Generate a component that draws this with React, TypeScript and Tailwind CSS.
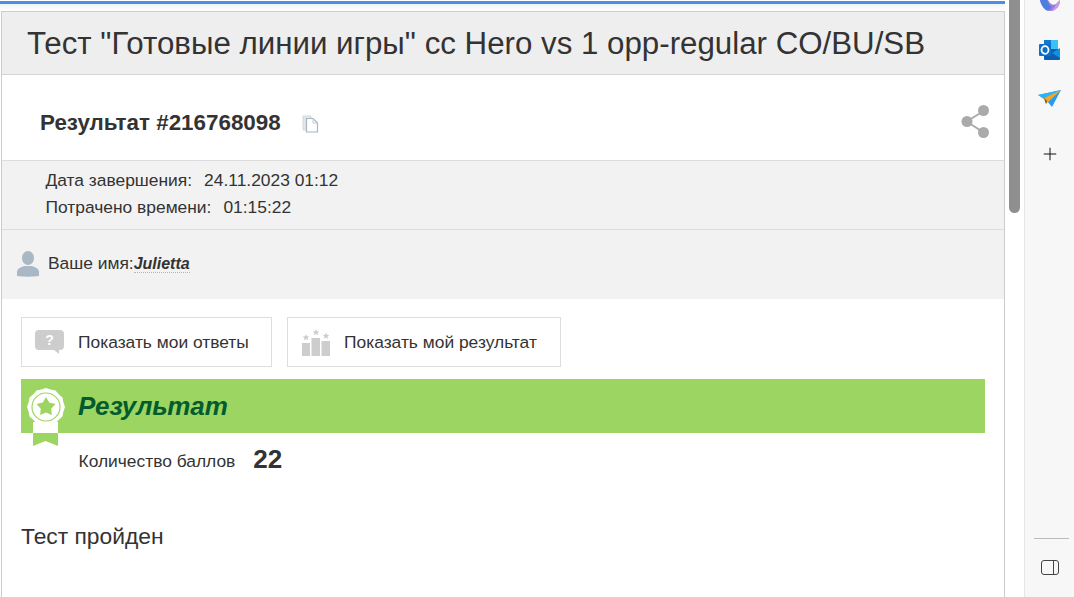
import { Plus } from 'lucide-react'

function CopyIcon() {
  return (
    <svg width="17" height="18" viewBox="0 0 17 18" className="block">
      <path d="M1 1h8v14H1z" fill="#e3e6ea" stroke="#d4d8dd" />
      <path d="M4.500 3.500h6.500l4.500 4.500v9h-11z" fill="#fff" stroke="#a9b4bf" strokeWidth="1.200" />
      <path d="M11 3.500V8h4.500" fill="none" stroke="#c5ccd3" />
    </svg>
  )
}

function ShareIcon() {
  return (
    <svg width="30" height="36" viewBox="0 0 30 36" className="block">
      <path d="M5.500 18.500 22 8.500M5.500 18.500 22 29" stroke="#aaa" strokeWidth="2" />
      <circle cx="6" cy="18.500" r="5.500" fill="#aaa" />
      <circle cx="22.500" cy="7.500" r="5.500" fill="#aaa" />
      <circle cx="22.500" cy="29.500" r="5.500" fill="#aaa" />
    </svg>
  )
}

function UserIcon() {
  return (
    <svg width="22" height="26" viewBox="0 0 22 26" className="block">
      <ellipse cx="11" cy="7" rx="6" ry="7" fill="#a9b8c4" />
      <path d="M0 25v-4c0-4 5-5 7-6h8c2 1 7 2 7 6v4q-11 1.500-22 0z" fill="#a9b8c4" />
    </svg>
  )
}

function QuestionIcon() {
  return (
    <svg width="29" height="24" viewBox="0 0 29 24" className="block">
      <path d="M4 0h21a4 4 0 0 1 4 4v12a4 4 0 0 1-4 4h-1v4l-5-4H4a4 4 0 0 1-4-4V4a4 4 0 0 1 4-4z" fill="#cdcdcd" />
      <text x="14.500" y="15" textAnchor="middle" fontSize="14" fontWeight="700" fill="#fff" fontFamily="Liberation Sans">?</text>
    </svg>
  )
}

function Star({ x, y, r }: { x: number; y: number; r: number }) {
  const pts = Array.from({ length: 10 }, (_, i) => {
    const a = (Math.PI / 5) * i - Math.PI / 2
    const d = i % 2 ? r * 0.45 : r
    return `${x + d * Math.cos(a)},${y + d * Math.sin(a)}`
  }).join(' ')
  return <polygon points={pts} fill="#cdcdcd" />
}

function PodiumIcon() {
  return (
    <svg width="30" height="27" viewBox="0 0 30 27" className="block">
      <Star x={5} y={8.500} r={3.500} />
      <Star x={15} y={3.500} r={3.500} />
      <Star x={25} y={7} r={3.500} />
      <rect x="1" y="14" width="8" height="13" fill="#cdcdcd" />
      <rect x="10.500" y="9" width="8.500" height="18" fill="#cdcdcd" />
      <rect x="20.500" y="12" width="8.500" height="15" fill="#cdcdcd" />
    </svg>
  )
}

function Badge() {
  const teeth = Array.from({ length: 24 }, (_, i) => {
    const a = (Math.PI / 12) * i
    const d = i % 2 ? 18 : 19
    return `${19 + d * Math.cos(a)},${19 + d * Math.sin(a)}`
  }).join(' ')
  const star = Array.from({ length: 10 }, (_, i) => {
    const a = (Math.PI / 5) * i - Math.PI / 2
    const d = i % 2 ? 5.500 : 10
    return `${19 + d * Math.cos(a)},${19 + d * Math.sin(a)}`
  }).join(' ')
  return (
    <svg width="38" height="59" viewBox="0 0 38 59" className="block">
      <path d="M6 34h25v24l-12.500-5L6 58z" fill="#9dd563" />
      <path d="M6 34h25v11H6z" fill="#fff" />
      <polygon points={teeth} fill="#fff" />
      <circle cx="19" cy="19" r="14" fill="#fff" stroke="#9dd563" strokeWidth="1.200" />
      <polygon points={star} fill="#9dd563" />
    </svg>
  )
}

function CopilotIcon() {
  return (
    <svg width="22" height="11" viewBox="0 0 22 11" className="block">
      <path d="M1 0h20c0 6-4 11-10 11C6 11 2 6 1 0z" fill="#9a78dc" />
      <path d="M1 0h7c1 3 2 5 4 7-1 3-3 4-5 3C4 8 2 4 1 0z" fill="#4a7ee0" />
      <path d="M9 0h12l-4 4c-3 2-6 0-8-4z" fill="#f7f7f7" />
      <path d="M21 0c0 6-4 11-10 11 3-1 5-4 6-7z" fill="#c99ae4" />
    </svg>
  )
}

function OutlookIcon() {
  return (
    <svg width="21" height="22" viewBox="0 0 21 22" className="block">
      <path d="M5 1h14v9H5z" fill="#28a8ea" />
      <path d="M5 1h7v9H5z" fill="#0f78d4" />
      <path d="M12 1h7v9h-7z" fill="#50d9ff" opacity="0.5" />
      <path d="M5 10h16v10a1 1 0 0 1-1 1H6a1 1 0 0 1-1-1z" fill="#0a5fb0" />
      <path d="M21 9v10l-8-5z" fill="#1490df" />
      <rect x="0" y="5" width="12" height="12" rx="1" fill="#0a6fc8" />
      <ellipse cx="6" cy="11" rx="3.500" ry="3.800" fill="none" stroke="#fff" strokeWidth="1.800" />
    </svg>
  )
}

function SendIcon() {
  return (
    <svg width="23" height="17" viewBox="0 0 23 17" className="block">
      <path d="M0 5 23 0 14 17 9 11z" fill="#2b9af0" />
      <path d="M0 5 23 0 6 8z" fill="#29b6f6" />
      <path d="M6 8 23 0 8 14z" fill="#f5a623" />
      <path d="M6 8 9 11 8 14z" fill="#6b5a20" />
    </svg>
  )
}

export default function App() {
  return (
    <div className="flex h-[597px] w-[1074px] overflow-hidden bg-white font-['Liberation_Sans',Arial,sans-serif] text-[#333]">
      <main className="w-[1005px] shrink-0 overflow-hidden pt-px">
        <div className="h-[3px] bg-[#4a8fe7]" />
        <div className="h-[7px] bg-gradient-to-b from-[#f2f2f2] to-white" />
        <div className="ml-px h-[600px] border border-[#ccc]">
          <header className="flex h-[63px] items-center border-b border-[#d4d4d4] bg-[#eee] pt-[2px] pl-[25px] text-[31.27px] leading-none whitespace-nowrap">
            Тест "Готовые линии игры" cc Hero vs 1 opp-regular CO/BU/SB
          </header>

          <div className="flex h-[85px] items-center justify-between pt-[11px] pr-[13px] pl-[38px]">
            <div className="flex items-center">
              <span className="text-[22.4px] font-bold">Результат #216768098</span>
              <span className="ml-[21px] mt-[3px]"><CopyIcon /></span>
            </div>
            <span className="-mt-[5px]"><ShareIcon /></span>
          </div>

          <div className="h-[70px] border-t border-b border-[#ddd] bg-[#f2f2f2] pt-[6px] pl-[43.5px] text-[17.4px] leading-[27px]">
            <div><span className="mr-[12px]">Дата завершения:</span>24.11.2023 01:12</div>
            <div><span className="mr-[12px]">Потрачено времени:</span>01:15:22</div>
          </div>

          <div className="flex h-[69px] items-center bg-[#f2f2f2] pb-[2px] pl-[15px] text-[17.4px]">
            <UserIcon />
            <span className="ml-[9px]">Ваше имя:</span>
            <span className="border-b border-dotted border-[#a9b8c4] text-[16px] leading-[17px] font-bold italic">Julietta</span>
          </div>

          <div className="flex gap-[15px] pt-[18px] pl-[19px]">
            <button className="flex h-[50px] w-[251px] items-center border border-[#ddd] pl-[13px] text-[17.4px]">
              <QuestionIcon />
              <span className="ml-[14px]">Показать мои ответы</span>
            </button>
            <button className="flex h-[50px] w-[274px] items-center border border-[#ddd] pl-[13px] text-[17.4px]">
              <PodiumIcon />
              <span className="ml-[13px]">Показать мой результат</span>
            </button>
          </div>

          <div className="relative mt-[12px] ml-[19px] flex h-[54px] w-[964px] items-center bg-[#9dd563] pl-[57px] text-[26px] font-bold text-[#025c2e] italic">
            Результат
            <span className="absolute top-[9px] left-[6px]"><Badge /></span>
          </div>

          <div className="flex items-center pt-[7px] pl-[76.5px]">
            <span className="mt-[3px] text-[17.4px]">Количество баллов</span>
            <span className="ml-[18px] text-[26px] font-bold">22</span>
          </div>

          <p className="mt-[40px] ml-[19px] text-[22.8px]">Тест пройден</p>
        </div>
      </main>

      <div className="w-[19px] shrink-0 pl-[4px]">
        <div className="h-[213px] w-[11px] rounded-b-[6px] bg-[#8f8f8f]" />
      </div>

      <aside className="flex w-[50px] shrink-0 flex-col items-center border-l border-[#e6e6e6] bg-[#f7f7f7]">
        <div className="h-[11px]"><CopilotIcon /></div>
        <div className="mt-[28px]"><OutlookIcon /></div>
        <div className="mt-[29px]"><SendIcon /></div>
        <Plus size={20} strokeWidth={1.2} color="#111" className="mt-[37px]" />
        <div className="mt-auto mb-[21px] mr-[5px] h-px w-[35px] self-end bg-[#bbb]" />
        <div className="mb-[22px] flex h-[15px] w-[18px] justify-end rounded-[3px] border-[1.5px] border-[#444]">
          <div className="w-[5px] border-l-[1.5px] border-[#444]" />
        </div>
      </aside>
    </div>
  )
}
